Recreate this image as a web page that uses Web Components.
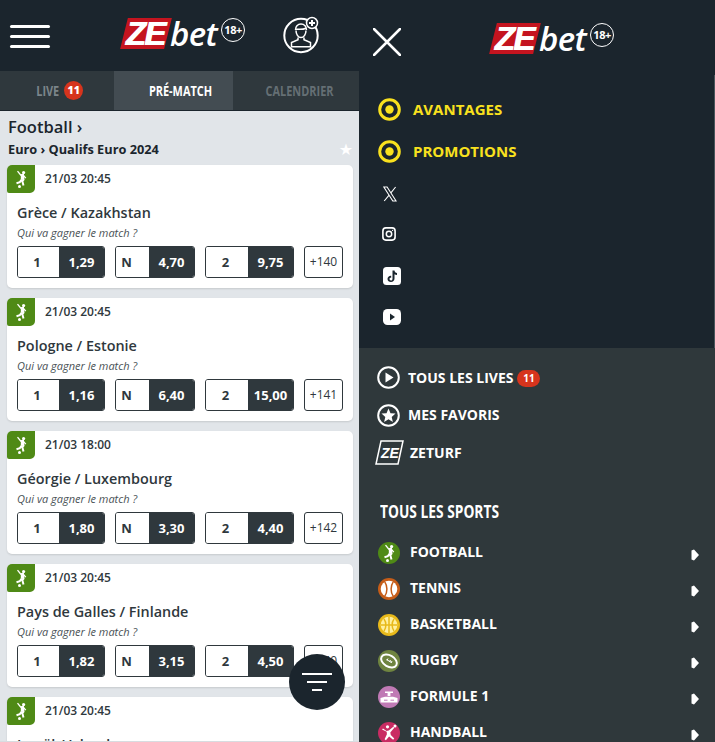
<!DOCTYPE html>
<html lang="fr">
<head>
<meta charset="utf-8">
<title>ZEbet</title>
<style>
  html, body { margin: 0; height: 100%; overflow: hidden; }
  body { font-family: "Open Sans", "Liberation Sans", sans-serif; background: #1b252d; }
  #page { display: flex; height: 742px; width: 715px; overflow: hidden; }
</style>
</head>
<body>
<div id="page">
  <ze-panel-left>
    <ze-top-bar>
      <ze-burger slot="left"></ze-burger>
      <ze-account slot="right"></ze-account>
    </ze-top-bar>
    <ze-tabs></ze-tabs>
    <ze-match-list title-main="Football ›" title-sub="Euro › Qualifs Euro 2024">
      <ze-match-card date="21/03 20:45" name="Grèce / Kazakhstan" o1="1,29" on="4,70" o2="9,75" more="+140"></ze-match-card>
      <ze-match-card date="21/03 20:45" name="Pologne / Estonie" o1="1,16" on="6,40" o2="15,00" more="+141"></ze-match-card>
      <ze-match-card date="21/03 18:00" name="Géorgie / Luxembourg" o1="1,80" on="3,30" o2="4,40" more="+142"></ze-match-card>
      <ze-match-card date="21/03 20:45" name="Pays de Galles / Finlande" o1="1,82" on="3,15" o2="4,50" more="+140"></ze-match-card>
      <ze-match-card date="21/03 20:45" name="Israël / Islande" o1="1,95" on="3,40" o2="3,60" more="+140"></ze-match-card>
    </ze-match-list>
    <ze-filter-fab></ze-filter-fab>
  </ze-panel-left>
  <ze-panel-right></ze-panel-right>
</div>
<script>
const ICONS = {
  kicker: `<circle cx="13.600" cy="4.600" r="1.600" fill="#fff"/><path d="M7.500 3.200l3.600 4.300M15.800 10.200l-2.800-3.400" stroke="#fff" stroke-width="1.300" fill="none"/><path d="M11 7.200l2-.5.500 5-1.200 1.400 1.200 4.400M11.800 11.500l-2 2.700-3.300 1" stroke="#fff" stroke-width="2" fill="none"/><path d="M10.800 7.200h2.400l.4 4.600h-2.800z" fill="#fff"/><circle cx="9.500" cy="18.400" r="1.500" fill="#fff"/>`,
  tennis: `<circle cx="11" cy="11" r="8.300" fill="#fff"/><path d="M6.800 3.800c2.800 4.200 2.800 10.200 0 14.400M15.200 3.800c-2.800 4.200-2.800 10.200 0 14.400" fill="none" stroke="#c65d18" stroke-width="1.500"/>`,
  basket: `<circle cx="11" cy="11" r="8.300" fill="#fff0a0"/><path d="M11 3v16M3 11h16M6 5c2.500 3.500 2.500 8.500 0 12M16 5c-2.500 3.500-2.500 8.500 0 12" fill="none" stroke="#e8b91a" stroke-width="1.500"/>`,
  rugby: `<ellipse cx="11" cy="11" rx="8.500" ry="5.600" transform="rotate(30 11 11)" fill="none" stroke="#fff" stroke-width="2"/><path d="M8.500 9.500l5 3M10 8.500l-1 2M12.500 10l-1 2M14 11l-1 2" stroke="#fff" stroke-width="1" fill="none"/>`,
  f1: `<path d="M7 5.500h8v1.500h-2.600v3h-2.800v-3h-2.600zM2.500 12l4.500-1.200h8l4.500 1.200v4.500h-17z" fill="#fff"/><path d="M6 14.200h3.500M12.500 14.200h3.500" stroke="#c07ab5" stroke-width="1"/>`,
  hand: `<circle cx="9.500" cy="4.800" r="1.600" fill="#fff"/><path d="M4 7.500l1-1 3.500 2.500 2.300-.5 4.500-3.800 1 1-4 4.800.5 2.500 3.500 3.500-1.200 1.200-4-3.200-3.200 3.800-1.300-1 2.300-5-.2-2.500z" fill="#fff"/><circle cx="17" cy="4" r="1.500" fill="#fff"/>`
};

function makeShadow(el, html) {
  const tpl = document.createElement('template');
  tpl.innerHTML = html;
  el.attachShadow({mode: 'open'}).appendChild(tpl.content.cloneNode(true));
}

class ZeLogo extends HTMLElement {
  constructor() {
    super();
    makeShadow(this, `<style>
      :host { display: inline-flex; align-items: flex-start; width: 127px; height: 34px; color: #fff; }
      .ze { position: relative; width: 50px; height: 31px; margin-top: 2px; display: flex; align-items: center; justify-content: center; flex: none;
        font: italic 700 33px "Liberation Sans", sans-serif; letter-spacing: -1.500px; }
      .ze::before { content: ""; position: absolute; inset: 0 2px 0 4px; background: #c4141f; transform: skewX(-14deg); }
      .ze span { position: relative; text-shadow: 1px 0 #fff; }
      .bet { font: italic 600 33px/34px "Open Sans", sans-serif; margin-left: 0; letter-spacing: -.6px; margin-top: 1px; flex: none; }
      .age { width: 24px; height: 24px; box-sizing: border-box; border: 1px solid #fff; border-radius: 50%; font: 700 11px/22px "Open Sans", sans-serif;
        text-align: center; letter-spacing: -.4px; margin: 2px 0 0 4px; flex: none; }
    </style><div class="ze"><span>ZE</span></div><div class="bet">bet</div><div class="age">18+</div>`);
  }
}

class ZeBurger extends HTMLElement {
  constructor() {
    super();
    makeShadow(this, `<style>
      :host { display: flex; flex-direction: column; gap: 7px; width: 40px; }
      i { display: block; height: 3px; border-radius: 2px; background: #fff; }
    </style><i></i><i></i><i></i>`);
  }
}

class ZeAccount extends HTMLElement {
  constructor() {
    super();
    makeShadow(this, `<style>:host { display: block; width: 38px; height: 38px; } svg { display: block; }</style>
    <svg width="38" height="38" viewBox="0 0 38 38" fill="none" stroke="#fff">
      <circle cx="18" cy="19.500" r="16.700" stroke-width="2"/>
      <path d="M12.500 14c-.3-3.500 2.300-6 5.500-6s5.800 2.500 5.500 6M13 14.500c0 3.500 2 7 5 7s5-3.500 5-7M13 13c3 .5 7 .5 10-.8" stroke-width="1.500"/>
      <path d="M15 21.500v2.300l-6.500 2.700v4.300h19v-4.300l-6.500-2.700v-2.300" stroke-width="1.500"/>
      <circle cx="29" cy="7" r="5.500" fill="#1b252d" stroke-width="1.500"/>
      <path d="M29 4v6M26 7h6" stroke-width="2"/>
    </svg>`);
  }
}

class ZeTopBar extends HTMLElement {
  constructor() {
    super();
    makeShadow(this, `<style>
      :host { display: block; height: 71px; background: #1b252d; flex: none; }
      .bar { display: grid; grid-template-columns: 120px 127px 1fr; height: 100%; align-items: center; }
      .l { padding: 1px 0 0 10px; }
      .r { padding: 0 0 1px 36px; }
      .c { padding-bottom: 5px; }
    </style><div class="bar"><div class="l"><slot name="left"></slot></div><div class="c"><ze-logo></ze-logo></div><div class="r"><slot name="right"></slot></div></div>`);
  }
}

class ZeTabs extends HTMLElement {
  constructor() {
    super();
    makeShadow(this, `<style>
      :host { display: grid; grid-template-columns: 114px 119px 1fr; height: 40px; flex: none; background: #2f383d; box-sizing: border-box; border-bottom: 1px solid #1b252d;
        font: 700 14px "Open Sans", sans-serif; text-transform: uppercase; }
      div { display: flex; align-items: center; justify-content: center; color: #7b858a; box-sizing: border-box; }
      span { display: inline-block; transform: scaleX(.78); }
      .live { padding-left: 4px; gap: 6px; }
      .live span { margin-left: -2px; }
      .on { background: #434c52; color: #fff; padding-left: 14px; }
      .last { padding-left: 7px; color: #656f74; }
      b { width: 19px; height: 19px; border-radius: 50%; background: #d6341d; color: #fff; font-size: 10.500px; line-height: 19px; text-align: center; margin-left: -4px; }
    </style><div class="live"><span>Live</span><b>11</b></div><div class="on"><span>Pré-match</span></div><div class="last"><span>Calendrier</span></div>`);
  }
}

class ZeOdd extends HTMLElement {
  static get observedAttributes() { return ['label', 'value']; }
  constructor() {
    super();
    makeShadow(this, `<style>
      :host { display: flex; height: 32px; box-sizing: border-box; border: 1px solid #2f383d; border-radius: 3px; overflow: hidden; font: 700 13px/30px "Open Sans", sans-serif; color: #2f383d; }
      .l { flex: 1; text-align: center; background: #fff; padding-right: var(--pr, 3px); }
      .v { width: 45px; text-align: center; background: #2f383d; color: #fff; }
    </style><div class="l"></div><div class="v"></div>`);
  }
  attributeChangedCallback() {
    this.shadowRoot.querySelector('.l').textContent = this.getAttribute('label') || '';
    this.shadowRoot.querySelector('.v').textContent = this.getAttribute('value') || '';
  }
}

class ZeMatchCard extends HTMLElement {
  connectedCallback() {
    if (this.shadowRoot) return;
    const a = n => this.getAttribute(n);
    makeShadow(this, `<style>
      :host { display: block; height: 123px; margin-bottom: 10px; background: #fff; border-radius: 5px; box-sizing: border-box; padding: 0 10px; position: relative; color: #2f383d; box-shadow: 0 1px 2px rgba(0,0,0,.12); }
      .sport { position: absolute; left: 0; top: 0; width: 28px; height: 28px; background: #4f8a16; border-radius: 5px 0 5px 2px; }
      .sport svg { display: block; margin: 3px; }
      .date { font: 600 12px/28px "Open Sans", sans-serif; padding-left: 28px; }
      .name { font: 600 14.400px/20px "Open Sans", sans-serif; margin-top: 10px; }
      .q { font: italic 400 11px/16px "Open Sans", sans-serif; margin-top: 2px; color: #4a5256; }
      .odds { display: grid; grid-template-columns: 88px 80px 89px 39px; gap: 10px; margin-top: 5px; }
      .more { height: 32px; box-sizing: border-box; border: 1px solid #2f383d; border-radius: 3px; font: 500 12px/30px "Open Sans", sans-serif; text-align: center; }
    </style>
    <div class="sport"><svg width="22" height="22" viewBox="0 0 22 22">${ICONS.kicker}</svg></div>
    <div class="date">${a('date')}</div>
    <div class="name">${a('name')}</div>
    <div class="q">Qui va gagner le match ?</div>
    <div class="odds">
      <ze-odd label="1" value="${a('o1')}"></ze-odd>
      <ze-odd label="N" value="${a('on')}" style="--pr:12px"></ze-odd>
      <ze-odd label="2" value="${a('o2')}"></ze-odd>
      <div class="more">${a('more')}</div>
    </div>`);
  }
}

class ZeMatchList extends HTMLElement {
  connectedCallback() {
    if (this.shadowRoot) return;
    makeShadow(this, `<style>
      :host { display: block; flex: 1; min-height: 0; overflow: hidden; background: #e1e5e9; padding: 0 6px 0 7px; color: #1b252d; position: relative; box-sizing: border-box; border-bottom: 1px solid #d8dce0; }
      h1 { font: 600 16.500px/22px "Open Sans", sans-serif; margin: 5px 0 0 1px; }
      h2 { font: 700 12.750px/18px "Open Sans", sans-serif; margin: 2px 0 7px 1px; }
      .star { position: absolute; right: 6px; top: 31px; color: #fff; font: 16px/16px "DejaVu Sans", sans-serif; }
    </style>
    <h1>${this.getAttribute('title-main')}</h1>
    <h2>${this.getAttribute('title-sub')}</h2>
    <div class="star">★</div>
    <slot></slot>`);
  }
}

class ZeFilterFab extends HTMLElement {
  constructor() {
    super();
    makeShadow(this, `<style>
      :host { position: absolute; left: 289px; top: 654px; width: 56px; height: 56px; border-radius: 50%; background: #1b252d; display: flex; flex-direction: column; align-items: center; justify-content: center; gap: 6px; }
      i { display: block; height: 2px; background: #fff; }
    </style><i style="width:30px"></i><i style="width:20px"></i><i style="width:10px"></i>`);
  }
}

class ZeMenuLink extends HTMLElement {
  connectedCallback() {
    if (this.shadowRoot) return;
    makeShadow(this, `<style>
      :host { display: flex; align-items: center; color: #fff; font: 700 14px/20px "Open Sans", sans-serif; text-transform: uppercase; white-space: nowrap; }
      ::slotted(svg) { display: block; flex: none; }
      .t { margin-left: var(--tx, 8px); }
    </style><slot name="icon"></slot><span class="t"><slot></slot></span>`);
  }
}

class ZeSportRow extends HTMLElement {
  connectedCallback() {
    if (this.shadowRoot) return;
    const c = this.getAttribute('color');
    const inner = ICONS[this.getAttribute('icon')];
    makeShadow(this, `<style>
      :host { display: flex; align-items: center; height: 36px; color: #fff; font: 700 14px/20px "Open Sans", sans-serif; text-transform: uppercase; }
      svg { display: block; flex: none; }
      .t { flex: 1; margin-left: 10px; margin-top: -1px; }
      .arrow { margin: 5px 16px 0 0; }
    </style>
    <svg width="22" height="22" viewBox="0 0 22 22"><circle cx="11" cy="11" r="11" fill="${c}"/>${inner}</svg>
    <span class="t">${this.getAttribute('label')}</span>
    <svg class="arrow" width="8" height="12" viewBox="0 0 8 12"><path d="M.5 1.500L3 .5 8 6l-5 5.500-2.500-1z" fill="#fff"/></svg>`);
  }
}

class ZePanelLeft extends HTMLElement {
  constructor() {
    super();
    makeShadow(this, `<style>
      :host { display: flex; flex-direction: column; flex: none; width: 359px; height: 742px; position: relative; overflow: hidden; }
    </style><slot></slot>`);
  }
}

class ZePanelRight extends HTMLElement {
  constructor() {
    super();
    makeShadow(this, `<style>
      :host { display: flex; flex-direction: column; flex: none; width: 356px; height: 742px; overflow: hidden; background: #2f383b; }
      .top { background: #1b252d; height: 348px; box-sizing: border-box; flex: none; position: relative; }
      .top::after { content: ""; position: absolute; right: 0; top: 75px; bottom: 0; width: 1px; background: #4a555b; }
      .head { display: flex; height: 80px; }
      .head svg { display: block; margin: 28px 0 0 14px; flex: none; }
      .head ze-logo { margin: 21px 0 0 88px; }
      .promo { padding: 8px 0 0 19px; display: flex; flex-direction: column; }
      .promo ze-menu-link { color: #f9e11e; --tx: 12px; height: 42px; font-size: 15px; }
      .social { display: flex; flex-direction: column; padding: 2px 0 0 24px; }
      .social div { display: flex; align-items: center; }
      .social svg { display: block; }
      .bottom { padding: 11px 0 0 16px; }
      .lnk { display: flex; flex-direction: column; }
      .lnk ze-menu-link { height: 37.500px; }
      .badge { display: inline-block; width: 23px; height: 17px; border-radius: 9px; background: #d6341d; font-size: 10px; line-height: 17px; text-align: center; margin-left: 4px; vertical-align: 1px; }
      h3 { margin: 28px 0 0 5px; font: 700 17px/24px "Open Sans", sans-serif; color: #fff; text-transform: uppercase; transform: scaleX(.81); transform-origin: 0 0; white-space: nowrap; }
      .sports { padding: 11px 0 0 3px; display: flex; flex-direction: column; }
    </style>
    <div class="top">
      <div class="head">
        <svg width="28" height="28" viewBox="0 0 28 28"><path d="M1 1l26 26M27 1L1 27" stroke="#fff" stroke-width="2.500" stroke-linecap="round"/></svg>
        <ze-logo></ze-logo>
      </div>
      <div class="promo">
        <ze-menu-link><svg slot="icon" width="23" height="23" viewBox="0 0 23 23"><circle cx="11.500" cy="11.500" r="9.800" fill="none" stroke="#f9e11e" stroke-width="3"/><circle cx="11.500" cy="11.500" r="4.200" fill="#f9e11e"/></svg>Avantages</ze-menu-link>
        <ze-menu-link><svg slot="icon" width="23" height="23" viewBox="0 0 23 23"><circle cx="11.500" cy="11.500" r="9.800" fill="none" stroke="#f9e11e" stroke-width="3"/><circle cx="11.500" cy="11.500" r="4.200" fill="#f9e11e"/></svg>Promotions</ze-menu-link>
      </div>
      <div class="social">
        <div style="height:40px"><svg width="14" height="16" viewBox="0 0 14 16"><path d="M.8 1h3.300l9 14h-3.300zM12.600 1L7.900 6.800M5.900 9.300L1.200 15" fill="none" stroke="#fff" stroke-width="1.100"/></svg></div>
        <div style="height:39px;margin-left:-1px"><svg width="14" height="14" viewBox="0 0 14 14" fill="none" stroke="#fff"><rect x=".9" y=".9" width="12.200" height="12.200" rx="3" stroke-width="1.600"/><circle cx="7" cy="7" r="2.700" stroke-width="1.500"/><circle cx="10.600" cy="3.400" r=".6" fill="#fff" stroke="none"/></svg></div>
        <div style="height:46px"><svg width="18" height="18" viewBox="0 0 18 18"><rect width="18" height="18" rx="3.500" fill="#fff"/><path d="M9.500 3.500h2c.2 1.500 1 2.300 2.500 2.500v2c-1 0-1.800-.3-2.500-.8v4.300c0 2.200-1.600 3.500-3.500 3.500S4.500 13.800 4.500 12s1.600-3.500 3.700-3.300v2.100c-1-.2-1.700.4-1.700 1.200s.7 1.400 1.500 1.400 1.500-.6 1.500-1.500z" fill="#1b252d"/></svg></div>
        <div style="height:36px"><svg width="18" height="16" viewBox="0 0 18 16"><rect width="18" height="16" rx="4.500" fill="#fff"/><path d="M7 4.600l5 3.400-5 3.400z" fill="#1b252d"/></svg></div>
      </div>
    </div>
    <div class="bottom">
      <div class="lnk">
        <ze-menu-link style="--tx:8px;margin-left:2px"><svg slot="icon" width="23" height="23" viewBox="0 0 23 23"><circle cx="11.500" cy="11.500" r="10.300" fill="none" stroke="#fff" stroke-width="2"/><path d="M8.500 6.500l8 5-8 5z" fill="#fff"/></svg>Tous les lives<span class="badge">11</span></ze-menu-link>
        <ze-menu-link style="--tx:8px;margin-left:2px"><svg slot="icon" width="23" height="23" viewBox="0 0 23 23"><circle cx="11.500" cy="11.500" r="10.300" fill="none" stroke="#fff" stroke-width="2"/><path d="M11.500 4.500l2 4.700 5 .4-3.800 3.300 1.200 5-4.400-2.700-4.400 2.700 1.200-5-3.800-3.300 5-.4z" fill="#fff"/></svg>Mes favoris</ze-menu-link>
        <ze-menu-link style="--tx:6px"><svg slot="icon" width="29" height="25" viewBox="0 0 29 25"><path d="M6 1h22l-5 23H1z" fill="none" stroke="#fff" stroke-width="1.500"/><text x="6" y="18" fill="#fff" font-family="Liberation Sans" font-style="italic" font-weight="700" font-size="14">ZE</text></svg>Zeturf</ze-menu-link>
      </div>
      <h3>Tous les sports</h3>
      <div class="sports">
        <ze-sport-row label="Football" icon="kicker" color="#4f8a16"></ze-sport-row>
        <ze-sport-row label="Tennis" icon="tennis" color="#c65d18"></ze-sport-row>
        <ze-sport-row label="Basketball" icon="basket" color="#e8b91a"></ze-sport-row>
        <ze-sport-row label="Rugby" icon="rugby" color="#6f8440"></ze-sport-row>
        <ze-sport-row label="Formule 1" icon="f1" color="#c07ab5"></ze-sport-row>
        <ze-sport-row label="Handball" icon="hand" color="#c92c63"></ze-sport-row>
      </div>
    </div>`);
  }
}

customElements.define('ze-logo', ZeLogo);
customElements.define('ze-burger', ZeBurger);
customElements.define('ze-account', ZeAccount);
customElements.define('ze-top-bar', ZeTopBar);
customElements.define('ze-tabs', ZeTabs);
customElements.define('ze-odd', ZeOdd);
customElements.define('ze-match-card', ZeMatchCard);
customElements.define('ze-match-list', ZeMatchList);
customElements.define('ze-filter-fab', ZeFilterFab);
customElements.define('ze-menu-link', ZeMenuLink);
customElements.define('ze-sport-row', ZeSportRow);
customElements.define('ze-panel-left', ZePanelLeft);
customElements.define('ze-panel-right', ZePanelRight);
</script>
</body>
</html>
